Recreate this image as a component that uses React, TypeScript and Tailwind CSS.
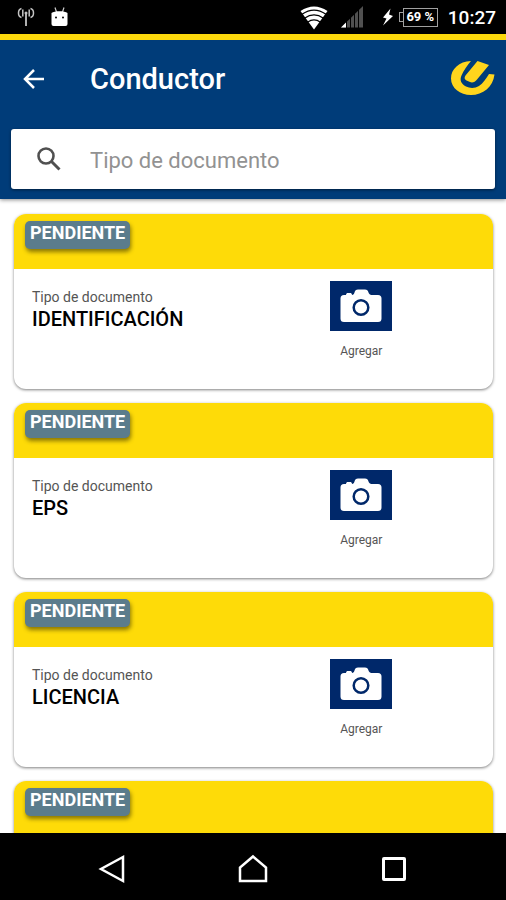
type Documento = {
  id: number;
  estado: string;
  nombre?: string;
};

const documentos: Documento[] = [
  { id: 1, estado: "PENDIENTE", nombre: "IDENTIFICACIÓN" },
  { id: 2, estado: "PENDIENTE", nombre: "EPS" },
  { id: 3, estado: "PENDIENTE", nombre: "LICENCIA" },
  { id: 4, estado: "PENDIENTE" },
];

function StatusBar() {
  return (
    <div className="flex h-[34px] shrink-0 items-center justify-between bg-black pr-[10px] pl-[17px] text-white">
      <div className="flex items-center gap-4">
        <svg width="18" height="20" viewBox="0 0 18 20" fill="none" stroke="#c4c4c4" strokeWidth="1.5">
          <path d="M9 7v12" strokeWidth="1.8" />
          <circle cx="9" cy="6" r="1.5" fill="#c4c4c4" stroke="none" />
          <path d="M5.800 2.500v7M12.200 2.500v7M4.500 1.500C.5 2.500.5 9.500 4.500 10.500M13.500 1.500c4 1 4 8 0 9" />
        </svg>
        <svg width="17" height="20" viewBox="0 0 17 20">
          <path d="M4 0.500l1.500 4.500M13 0.500l-1.500 4.500" stroke="#ccc" strokeWidth="1.200" />
          <path d="M0.500 6C2 4.800 5 4.300 8.500 4.300s6.500.5 8 1.700v11a2 2 0 0 1-2 2h-12a2 2 0 0 1-2-2z" fill="#fff" />
          <circle cx="5" cy="10.500" r="1" fill="#000" />
          <circle cx="12" cy="10.500" r="1" fill="#000" />
        </svg>
      </div>
      <div className="flex items-center">
        <svg className="mt-[2px]" width="28" height="24" viewBox="0 0 28 24">
          <path d="M0.500 5Q14-4 27.500 5L14 23.500z" fill="#fff" />
          <path d="M2 8.200Q14 0 26 8.200M4.500 12.200Q14 5.500 23.500 12.200M7.500 16.200Q14 11.500 20.500 16.200" fill="none" stroke="#000" strokeWidth="1.300" />
        </svg>
        <svg className="ml-[13px]" width="22" height="22" viewBox="0 0 22 22">
          <path d="M0 21.500L22 0v21.500z" fill="#505050" />
          <path d="M0 21.500L5 16.500v5z" fill="#fff" />
          <path d="M5.500 15v7M9.500 11v11M13.500 7v15M17.500 3v19" stroke="#000" strokeWidth="1" />
        </svg>
        <svg className="ml-[19px]" width="12" height="18" viewBox="0 0 12 18">
          <path d="M8.500 0.500L1 9.500l3.500 1L1 17.500l10-9.500-4-1.500z" fill="#fff" />
        </svg>
        <div className="ml-[5px] flex items-center">
          <span className="h-[10px] w-1 border border-r-0 border-[#a0a0a0]" />
          <span className="flex h-[19px] w-[35px] items-center justify-center border border-[#a0a0a0] text-[13px] leading-4 font-bold whitespace-nowrap">
            69 %
          </span>
        </div>
        <span className="ml-[10px] pt-[2px] text-[19px] leading-6 font-medium">10:27</span>
      </div>
    </div>
  );
}

function Logo() {
  return (
    <svg width="44" height="35" viewBox="0 0 44 35" fill="#ffd51d" role="img" aria-label="Logo">
      <path d="M20 0C8 .5 0 8 0 17.500 0 27 9 34 20 34c12 0 22-8 23.500-20.500L38 13c-3 4.500-6 9.500-10 12-4 2.500-9 2.500-13 .5-5-2.500-6.500-6.500-4.500-11C12.500 9.500 16.500 4 20 0z" />
      <path d="M26.500 0L38 4 26 18.500c-2 2.500-4.500 3.500-7 2.500l-3.500-1.500c-2-1-2.500-3-1-5z" />
    </svg>
  );
}

function Header() {
  return (
    <header className="z-10 shrink-0 border-t-[6px] border-[#fcd80c] bg-[#003c79] px-[11px] pb-[10px] shadow-[0_1px_4px_rgba(0,0,0,0.45)]">
      <div className="flex h-[89px] items-center pb-3">
        <button type="button" aria-label="Volver" className="ml-3 flex size-6 items-center">
          <svg width="22" height="20" viewBox="0 0 22 20" fill="none" stroke="#fff" strokeWidth="2.500">
            <path d="M21 10H3M11 1L2 10l9 9" />
          </svg>
        </button>
        <h1 className="ml-[43px] flex-1 text-[29px] leading-9 font-medium text-white">Conductor</h1>
        <Logo />
      </div>
      <label className="flex h-[60px] items-center rounded-[3px] bg-white shadow-[0_1px_3px_rgba(0,0,0,0.5)]">
        <svg className="ml-[26px] shrink-0" width="24" height="24" viewBox="0 0 24 24" fill="none" stroke="#505050" strokeWidth="2.600">
          <circle cx="9" cy="9" r="7.500" />
          <path d="M14.500 14.500l8 8" strokeWidth="3" />
        </svg>
        <input
          type="search"
          aria-label="Tipo de documento"
          placeholder="Tipo de documento"
          className="ml-[29px] h-10 min-w-0 flex-1 bg-transparent pt-[2px] text-[22px] text-gray-800 outline-none placeholder:text-[#929292]"
        />
      </label>
    </header>
  );
}

function CameraIcon() {
  return (
    <svg width="42" height="34" viewBox="0 0 42 34">
      <path
        d="M4 6h2c0-1.500 1-2 2-2h2c1 0 2 .5 2 2 1.500 0 2-1 2.500-2.500C15 1.500 16 .5 18 .5h7c2 0 3 1 3.500 3C29 5 30 6 31.500 6H38a3.500 3.500 0 0 1 3.500 3.500v20A3.500 3.500 0 0 1 38 33H4a3.500 3.500 0 0 1-3.500-3.500v-20A3.500 3.500 0 0 1 4 6z"
        fill="#fff"
      />
      <circle cx="21" cy="18.500" r="7.300" fill="none" stroke="#00286a" strokeWidth="2.500" />
    </svg>
  );
}

function DocumentoCard({ documento }: { documento: Documento }) {
  return (
    <li className="h-[175px] shrink-0 overflow-hidden rounded-[12px] bg-white shadow-[0_1px_3px_rgba(0,0,0,0.5)]">
      <div className="flex h-[55px] items-start bg-[#fedb08] px-[11px] pt-[7px]">
        <span className="h-7 rounded-[5px] bg-[#5b7c8c] px-[5px] text-[18px] leading-6 font-bold text-white shadow-[1px_3px_4px_rgba(0,0,0,0.45)]">
          {documento.estado}
        </span>
      </div>
      {documento.nombre && (
        <div className="flex">
          <div className="w-[45%] pt-[18px] pl-[18px]">
            <p className="text-[14px] leading-5 text-[#555]">Tipo de documento</p>
            <h2 className="text-[20px] leading-6 font-medium text-black">{documento.nombre}</h2>
          </div>
          <div className="flex flex-1 flex-col items-center pt-3">
            <button
              type="button"
              aria-label={`Agregar ${documento.nombre}`}
              className="flex h-[50px] w-[62px] items-center justify-center bg-[#00286a]"
            >
              <CameraIcon />
            </button>
            <span className="mt-3 text-[12px] leading-4 text-[#555]">Agregar</span>
          </div>
        </div>
      )}
    </li>
  );
}

function NavBar() {
  return (
    <nav className="flex h-[67px] shrink-0 justify-center bg-black">
      <div className="grid w-5/6 grid-cols-3 place-items-center pt-1">
        <button type="button" aria-label="Atrás">
          <svg width="28" height="30" viewBox="0 0 28 30" fill="none" stroke="#fff" strokeWidth="2.500">
            <path d="M25 3v24L3 15z" />
          </svg>
        </button>
        <button type="button" aria-label="Inicio">
          <svg width="30" height="30" viewBox="0 0 30 30" fill="none" stroke="#fff" strokeWidth="2.500">
            <path d="M15 2.500L28 13.500V27H2V13.500z" />
          </svg>
        </button>
        <button type="button" aria-label="Recientes">
          <svg width="26" height="26" viewBox="0 0 26 26" fill="none" stroke="#fff" strokeWidth="3">
            <rect x="2.500" y="2.500" width="21" height="21" rx="0.500" />
          </svg>
        </button>
      </div>
    </nav>
  );
}

export default function App() {
  return (
    <div className="flex h-screen flex-col bg-white font-[Roboto,sans-serif]">
      <StatusBar />
      <Header />
      <main className="min-h-0 flex-1 overflow-hidden">
        <ul className="flex flex-col gap-[14px] pt-[15px] pr-[13px] pl-[14px]">
          {documentos.map((documento) => (
            <DocumentoCard key={documento.id} documento={documento} />
          ))}
        </ul>
      </main>
      <NavBar />
    </div>
  );
}
